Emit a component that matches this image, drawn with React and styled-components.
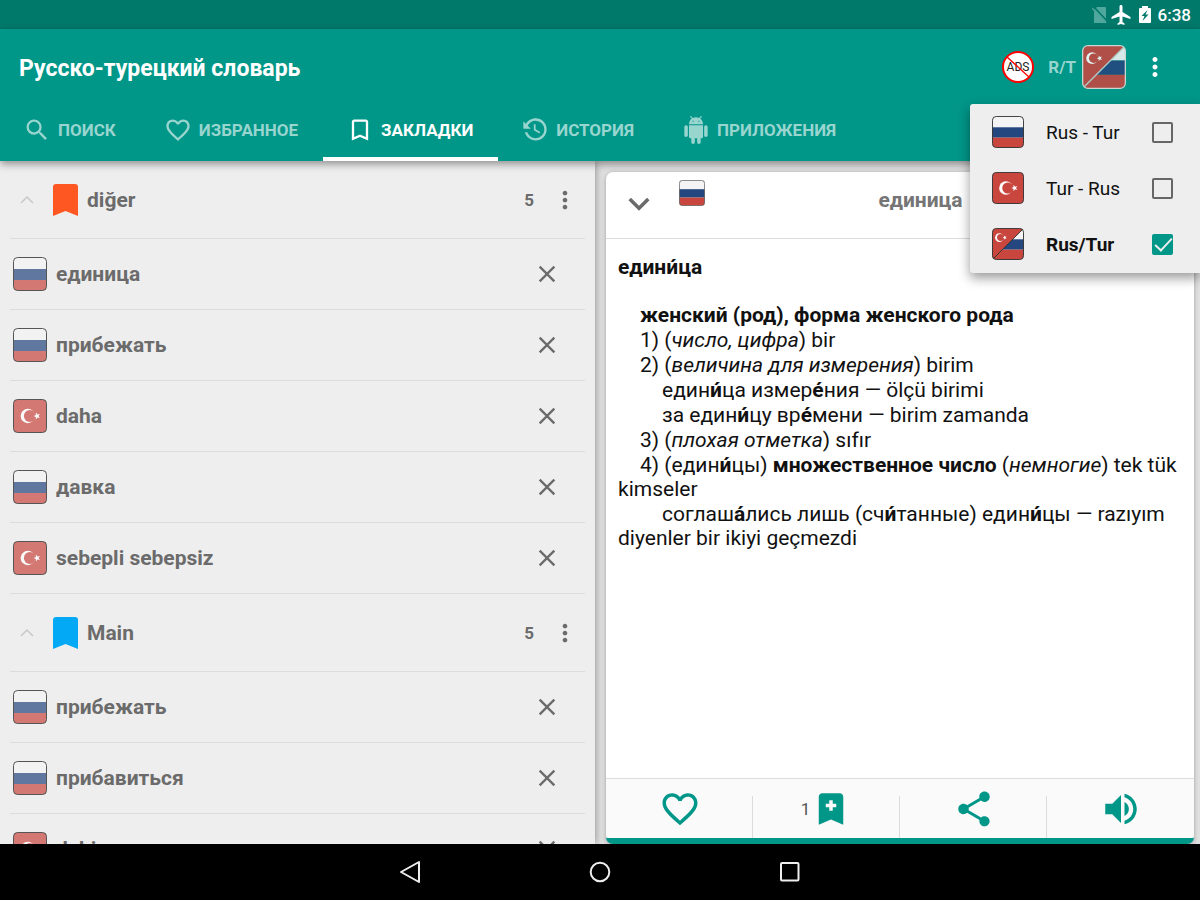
import React, { useState } from 'react'
import styled, { createGlobalStyle, css } from 'styled-components'

const teal = '#009688'

const paths = {
  search: 'M15.5 14h-.79l-.28-.27A6.471 6.471 0 0 0 16 9.5 6.5 6.5 0 1 0 9.5 16c1.61 0 3.09-.59 4.23-1.57l.27.28v.79l5 4.99L20.49 19l-4.99-5zm-6 0C7.01 14 5 11.99 5 9.5S7.01 5 9.5 5 14 7.01 14 9.5 11.99 14 9.5 14z',
  heart: 'M16.5 3c-1.74 0-3.41.81-4.5 2.09C10.91 3.81 9.24 3 7.5 3 4.42 3 2 5.42 2 8.5c0 3.78 3.4 6.86 8.55 11.54L12 21.35l1.45-1.32C18.6 15.36 22 12.28 22 8.5 22 5.42 19.58 3 16.5 3zm-4.4 15.55l-.1.1-.1-.1C7.14 14.24 4 11.39 4 8.5 4 6.5 5.5 5 7.5 5c1.54 0 3.04.99 3.57 2.36h1.87C13.46 5.99 14.96 5 16.5 5c2 0 3.5 1.5 3.5 3.5 0 2.89-3.14 5.74-7.9 10.05z',
  bookmark: 'M17 3H7c-1.1 0-1.99.9-1.99 2L5 21l7-3 7 3V5c0-1.1-.9-2-2-2zm0 15l-5-2.18L7 18V5h10v13z',
  history: 'M11 7v5.11l4.71 2.79.79-1.28-4-2.37V7M12.5 2C8.97 2 5.91 3.92 4.27 6.77L2 4.5V11h6.5L5.75 8.25C6.96 5.73 9.5 4 12.5 4a7.5 7.5 0 0 1 7.5 7.5 7.5 7.5 0 0 1-7.5 7.5c-3.27 0-6.03-2.09-7.06-5h-2.1c1.1 4.03 4.77 7 9.16 7 5.24 0 9.5-4.25 9.5-9.5A9.5 9.5 0 0 0 12.5 2z',
  android: 'M6 18c0 .55.45 1 1 1h1v3.5c0 .83.67 1.5 1.5 1.5s1.5-.67 1.5-1.5V19h2v3.5c0 .83.67 1.5 1.5 1.5s1.5-.67 1.5-1.5V19h1c.55 0 1-.45 1-1V8H6v10zM3.5 8C2.67 8 2 8.67 2 9.5v7c0 .83.67 1.5 1.5 1.5S5 17.33 5 16.5v-7C5 8.67 4.33 8 3.5 8zm17 0c-.83 0-1.5.67-1.5 1.5v7c0 .83.67 1.5 1.5 1.5s1.5-.67 1.5-1.5v-7c0-.83-.67-1.5-1.5-1.5zm-4.97-5.84l1.3-1.3c.2-.2.2-.51 0-.71-.2-.2-.51-.2-.71 0l-1.48 1.48C13.85 1.23 12.95 1 12 1c-.96 0-1.86.23-2.66.63L7.85.15c-.2-.2-.51-.2-.71 0-.2.2-.2.51 0 .71l1.31 1.31C6.97 3.26 6 5.01 6 7h12c0-1.99-.97-3.75-2.47-4.84zM10 5H9V4h1v1zm5 0h-1V4h1v1z',
  more: 'M12 8c1.1 0 2-.9 2-2s-.9-2-2-2-2 .9-2 2 .9 2 2 2zm0 2c-1.1 0-2 .9-2 2s.9 2 2 2 2-.9 2-2-.9-2-2-2zm0 6c-1.1 0-2 .9-2 2s.9 2 2 2 2-.9 2-2-.9-2-2-2z',
  close: 'M19 6.41L17.59 5 12 10.59 6.41 5 5 6.41 10.59 12 5 17.59 6.41 19 12 13.41 17.59 19 19 17.59 13.41 12z',
  share: 'M18 16.08c-.76 0-1.44.3-1.96.77L8.91 12.7c.05-.23.09-.46.09-.7s-.04-.47-.09-.7l7.05-4.11c.54.5 1.25.81 2.04.81 1.66 0 3-1.34 3-3s-1.34-3-3-3-3 1.34-3 3c0 .24.04.47.09.7L8.04 9.81C7.5 9.31 6.79 9 6 9c-1.66 0-3 1.34-3 3s1.34 3 3 3c.79 0 1.5-.31 2.04-.81l7.12 4.16c-.05.21-.08.43-.08.65 0 1.61 1.31 2.92 2.92 2.92 1.61 0 2.92-1.31 2.92-2.92s-1.31-2.92-2.92-2.92z',
  sound: 'M3 9v6h4l5 5V4L7 9H3zm13.5 3c0-1.77-1.02-3.29-2.5-4.03v8.05c1.48-.73 2.5-2.25 2.5-4.02zM14 3.23v2.06c2.89.86 5 3.54 5 6.71s-2.11 5.85-5 6.71v2.06c4.01-.91 7-4.49 7-8.77s-2.99-7.86-7-8.77z',
  bookmarkPlus: 'M17 3H7c-1.1 0-1.99.9-1.99 2L5 21l7-3 7 3V5c0-1.1-.9-2-2-2zM11 7h2v2h2v2h-2v2h-2v-2H9V9h2z',
  down: 'M7.41 7.84L12 12.42l4.59-4.58L18 9.25l-6 6-6-6z',
}

const Icon = ({ name, size = 28 }) => (
  <svg width={size} height={size} viewBox="0 0 24 24" fill="currentColor" fillRule="evenodd" aria-hidden="true">
    <path d={paths[name]} />
  </svg>
)

const Crescent = () => (
  <>
    <circle cx="14.8" cy="17" r="7.2" fill="#fff" />
    <circle cx="16.8" cy="17" r="5.9" fill="#c8463e" />
    <polygon
      points="24,13.4 24.9,15.8 27.4,15.9 25.4,17.5 26.1,19.9 24,18.5 21.9,19.9 22.6,17.5 20.6,15.9 23.1,15.8"
      fill="#fff"
      transform="rotate(-18 24 17)"
    />
  </>
)

// kind: rus, tur or both
const Flag = ({ kind, size, fade = 1, edge = '#555' }) => (
  <FlagSvg width={size} height={size} viewBox="0 0 34 34" $fade={fade} aria-hidden="true">
    <defs>
      <clipPath id="flagShape"><rect x="0.5" y="0.5" width="33" height="33" rx="4" /></clipPath>
    </defs>
    <g clipPath="url(#flagShape)">
      {kind !== 'tur' && (
        <>
          <rect width="34" height="12" fill="#f4f4f4" />
          <rect y="12" width="34" height="11" fill="#24477f" />
          <rect y="23" width="34" height="11" fill="#c8463e" />
        </>
      )}
      {kind === 'tur' && (
        <>
          <rect width="34" height="34" fill="#c8463e" />
          <Crescent />
        </>
      )}
      {kind === 'both' && (
        <>
          <path d="M0 0H34L0 34z" fill="#c8463e" />
          <path d="M34 0L0 34" stroke={edge} strokeWidth="1" />
          <g transform="translate(-1.5 -0.5) scale(.63)"><Crescent /></g>
        </>
      )}
    </g>
    <rect x="0.5" y="0.5" width="33" height="33" rx="4" fill="none" stroke={edge} strokeWidth="1" />
  </FlagSvg>
)

const tabs = [
  { icon: 'search', label: 'ПОИСК' },
  { icon: 'heart', label: 'ИЗБРАННОЕ' },
  { icon: 'bookmark', label: 'ЗАКЛАДКИ' },
  { icon: 'history', label: 'ИСТОРИЯ' },
  { icon: 'android', label: 'ПРИЛОЖЕНИЯ' },
]

const groups = [
  {
    name: 'diğer',
    color: '#ff5722',
    words: [
      { text: 'единица', lang: 'rus' },
      { text: 'прибежать', lang: 'rus' },
      { text: 'daha', lang: 'tur' },
      { text: 'давка', lang: 'rus' },
      { text: 'sebepli sebepsiz', lang: 'tur' },
    ],
    count: 5,
  },
  {
    name: 'Main',
    color: '#03a9f4',
    words: [
      { text: 'прибежать', lang: 'rus' },
      { text: 'прибавиться', lang: 'rus' },
      { text: 'dahi', lang: 'tur' },
    ],
    count: 5,
  },
]

const modes = [
  { id: 'rus', label: 'Rus - Tur' },
  { id: 'tur', label: 'Tur - Rus' },
  { id: 'both', label: 'Rus/Tur' },
]

const App = () => {
  const [tab, setTab] = useState(2)
  const [mode, setMode] = useState('both')

  return (
    <Screen>
      <GlobalStyle />
      <StatusBar>
        <svg width="15" height="18" viewBox="0 0 15 18" aria-hidden="true">
          <path d="M5 1h8q1 0 1 1v15H2V4z" fill="#4fa79d" />
          <path d="M1.5 0.5l14 15" stroke="#00796b" strokeWidth="1.6" />
          <path d="M0 2l14 15" stroke="#4fa79d" strokeWidth="1.3" />
        </svg>
        <svg width="20" height="20" viewBox="1.5 2 20 20" fill="#fff" aria-hidden="true">
          <path d="M21 16v-2l-8-5V3.5c0-.83-.67-1.5-1.5-1.5S10 2.67 10 3.5V9l-8 5v2l8-2.5V19l-2 1.5V22l3.5-1 3.5 1v-1.5L13 19v-5.5l8 2.5z" />
        </svg>
        <Battery width="12" height="17" viewBox="0 0 12 17" aria-hidden="true">
          <path d="M3 0h6v2h2q1 0 1 1v13q0 1-1 1H1q-1 0-1-1V3q0-1 1-1h2z" fill="#fff" />
          <path d="M8.5 4L2.5 10h3L3.5 15l6-6.5h-3z" fill="#00796b" />
        </Battery>
        <Clock>6:38</Clock>
      </StatusBar>
      <Header>
        <TitleRow>
          <Title>Русско-турецкий словарь</Title>
          <AdsButton aria-label="ADS">
            <svg width="34" height="34" viewBox="0 0 34 34">
              <circle cx="17" cy="17" r="15" fill="#fff" stroke="#f00" strokeWidth="2" />
              <text x="17" y="21" textAnchor="middle" fontSize="12" fontFamily="Roboto, sans-serif" fontWeight="400" fill="#222">ADS</text>
              <path d="M6 7l22 20" stroke="#f00" strokeWidth="1.3" />
            </svg>
          </AdsButton>
          <ModeButton>
            <span>R/T</span>
            <Flag kind={mode} size={44} fade={0.88} edge="#c9d6d2" />
          </ModeButton>
          <IconButton $color="#fff" aria-label="Меню">
            <Icon name="more" size={30} />
          </IconButton>
        </TitleRow>
        <Tabs>
          {tabs.map((t, i) => (
            <Tab key={t.label} $active={i === tab} onClick={() => setTab(i)}>
              <Icon name={t.icon} />
              {t.label}
            </Tab>
          ))}
        </Tabs>
        <Menu>
          {modes.map((m) => (
            <MenuItem key={m.id} $active={m.id === mode}>
              <Flag kind={m.id} size={32} edge="#333" />
              <span>{m.label}</span>
              <Check type="checkbox" checked={m.id === mode} onChange={() => setMode(m.id)} />
            </MenuItem>
          ))}
        </Menu>
      </Header>
      <Body>
        <ListPane>
          {groups.map((g) => (
            <section key={g.name}>
              <GroupRow>
                <Chevron width="16" height="10" viewBox="0 0 16 10" aria-hidden="true">
                  <path d="M2 8l6-6 6 6" fill="none" stroke="#c8c8c8" strokeWidth="1.5" />
                </Chevron>
                <svg width="25" height="32" viewBox="0 0 25 32" aria-hidden="true">
                  <path d="M3 0h19q3 0 3 3v29l-12.5-5L0 32V3q0-3 3-3z" fill={g.color} />
                </svg>
                <GroupName>{g.name}</GroupName>
                <Count>{g.count}</Count>
                <IconButton aria-label="Меню">
                  <Icon name="more" size={28} />
                </IconButton>
              </GroupRow>
              {g.words.map((w) => (
                <WordRow key={w.text}>
                  <Flag kind={w.lang} size={34} fade={0.7} />
                  <Word>{w.text}</Word>
                  <IconButton aria-label="Удалить">
                    <Icon name="close" />
                  </IconButton>
                </WordRow>
              ))}
            </section>
          ))}
        </ListPane>
        <CardPane>
          <Card>
            <CardHead>
              <IconButton aria-label="Свернуть">
                <Icon name="down" size={42} />
              </IconButton>
              <HeadFlag><Flag kind="rus" size={26} /></HeadFlag>
              <CardTitle>единица</CardTitle>
            </CardHead>
            <Article>
              <h2>едини́ца</h2>
              <Line $level={1}><b>женский (род), форма женского рода</b></Line>
              <Line $level={1}>1) (<i>число, цифра</i>) bir</Line>
              <Line $level={1}>2) (<i>величина для измерения</i>) birim</Line>
              <Line $level={2}>един<b>и́</b>ца измер<b>е́</b>ния — ölçü birimi</Line>
              <Line $level={2}>за един<b>и́</b>цу вр<b>е́</b>мени — birim zamanda</Line>
              <Line $level={1}>3) (<i>плохая отметка</i>) sıfır</Line>
              <Line $level={1}>4) (един<b>и́</b>цы) <b>множественное число</b> (<i>немногие</i>) tek tük kimseler</Line>
              <Line $level={2}>соглаш<b>а́</b>лись лишь (сч<b>и́</b>танные) един<b>и́</b>цы — razıyım diyenler bir ikiyi geçmezdi</Line>
            </Article>
            <Actions>
              <Action aria-label="Избранное"><Icon name="heart" size={42} /></Action>
              <Action aria-label="Закладки"><small>1</small><Icon name="bookmarkPlus" size={42} /></Action>
              <Action aria-label="Поделиться"><Icon name="share" size={42} /></Action>
              <Action aria-label="Произношение"><Icon name="sound" size={42} /></Action>
            </Actions>
          </Card>
        </CardPane>
      </Body>
      <NavBar>
        <NavButton aria-label="Назад">
          <svg width="24" height="24" viewBox="0 0 24 24"><path d="M21 2v20L3 12z" /></svg>
        </NavButton>
        <NavButton aria-label="Домой">
          <svg width="24" height="24" viewBox="0 0 24 24"><circle cx="12" cy="12" r="9.3" /></svg>
        </NavButton>
        <NavButton aria-label="Обзор">
          <svg width="24" height="24" viewBox="0 0 24 24"><rect x="3" y="3" width="17.5" height="17.5" rx="1" /></svg>
        </NavButton>
      </NavBar>
    </Screen>
  )
}

//styled components
const GlobalStyle = createGlobalStyle`
  * {
    box-sizing: border-box;
  }
  body {
    margin: 0;
    font-family: Roboto, sans-serif;
    color: #111;
  }
  button {
    border: 0;
    padding: 0;
    background: none;
    font: inherit;
    color: inherit;
    cursor: pointer;
  }
  svg {
    display: block;
    flex: none;
  }
`

const Screen = styled.div`
  display: flex;
  flex-direction: column;
  height: 100vh;
  overflow: hidden;
  background: #e0e0e0;
`

const StatusBar = styled.div`
  display: flex;
  align-items: center;
  justify-content: flex-end;
  flex: none;
  height: 29px;
  padding-right: 9px;
  gap: 4px;
  background: #00796b;
  color: #fff;
`

const Battery = styled.svg`
  margin: 0 3px 0 4px;
`

const Clock = styled.span`
  font-size: 17px;
  font-weight: 500;
`

const Header = styled.header`
  position: relative;
  z-index: 2;
  flex: none;
  background: ${teal};
  box-shadow: 0 3px 8px rgba(0, 0, 0, 0.4);
`

const TitleRow = styled.div`
  display: flex;
  align-items: center;
  height: 76px;
  padding: 0 30px 0 19px;
`

const Title = styled.h1`
  flex: 1;
  margin: 0;
  padding-top: 2px;
  font-size: 23px;
  font-weight: 700;
  color: #fff;
`

const AdsButton = styled.button`
  margin-right: 13px;
`

const ModeButton = styled.button`
  display: flex;
  align-items: center;
  gap: 6px;
  margin-right: 14px;
  font-size: 17px;
  font-weight: 700;
  color: #99d5cf;
`

const IconButton = styled.button`
  display: flex;
  color: ${({ $color }) => $color || '#6b6b6b'};
`

const Tabs = styled.nav`
  display: flex;
`

const Tab = styled.button`
  display: flex;
  align-items: center;
  gap: 7px;
  height: 56px;
  padding: 0 25px 2px 23px;
  font-size: 17px;
  font-weight: 700;
  color: #99d5cf;
  border-bottom: 4px solid transparent;

  ${({ $active }) => $active && css`
    color: #fff;
    border-color: #fff;
  `}
`

const Menu = styled.div`
  position: absolute;
  top: 75px;
  right: 0;
  width: 230px;
  padding-bottom: 1px;
  background: #eee;
  border-radius: 3px 0 0 3px;
  box-shadow: 0 5px 12px rgba(0, 0, 0, 0.4);
`

const MenuItem = styled.label`
  display: flex;
  align-items: center;
  height: 56px;
  padding: 0 27px 0 22px;
  font-size: 19px;
  font-weight: ${({ $active }) => ($active ? 700 : 400)};

  span {
    flex: 1;
    padding-left: 22px;
  }
`

const Check = styled.input`
  appearance: none;
  width: 21px;
  height: 21px;
  margin: 0;
  border: 2px solid #666;
  border-radius: 2px;

  &:checked {
    border-color: ${teal};
    background: ${teal};
  }
  &:checked::after {
    content: '';
    display: block;
    width: 7px;
    height: 15px;
    margin: -2px 0 0 5px;
    border: solid #eee;
    border-width: 0 2px 2px 0;
    transform: rotate(43deg);
  }
`

const Body = styled.main`
  display: grid;
  grid-template-columns: 119fr 121fr;
  grid-template-rows: 100%;
  flex: 1;
  min-height: 0;
`

const ListPane = styled.div`
  min-width: 0;
  overflow: hidden;
  padding: 0 10px;
  background: #eee;
  box-shadow: 0 0 8px rgba(0, 0, 0, 0.4);
`

const GroupRow = styled.div`
  display: flex;
  align-items: center;
  height: 78px;
  padding: 0 6px 0 9px;
  border-bottom: 1px solid #dcdcdc;
`

const Chevron = styled.svg`
  margin-right: 18px;
`

const GroupName = styled.h2`
  flex: 1;
  margin: 0 0 0 9px;
  font-size: 21px;
  font-weight: 700;
  color: #6b6b6b;
`

const Count = styled.span`
  margin-right: 17px;
  font-size: 17px;
  font-weight: 700;
  color: #6b6b6b;
`

const WordRow = styled.div`
  display: flex;
  align-items: center;
  height: 71px;
  padding: 0 24px 0 3px;
  border-bottom: 1px solid #dcdcdc;
`

const Word = styled.span`
  flex: 1;
  padding-left: 9px;
  font-size: 21px;
  font-weight: 700;
  color: #6b6b6b;
`

const FlagSvg = styled.svg`
  g {
    opacity: ${({ $fade }) => $fade};
  }
  g g {
    opacity: 1;
  }
`

const CardPane = styled.div`
  display: flex;
  min-width: 0;
  padding: 11px 6px 0 11px;
`

const Card = styled.article`
  display: flex;
  flex: 1;
  flex-direction: column;
  background: #fff;
  border-bottom: 6px solid ${teal};
  border-radius: 7px;
  box-shadow: 0 1px 4px rgba(0, 0, 0, 0.3);
  overflow: hidden;
`

const CardHead = styled.div`
  display: flex;
  align-items: center;
  height: 67px;
  padding: 0 12px;
  border-bottom: 1px solid #dcdcdc;
`

const HeadFlag = styled.div`
  align-self: flex-start;
  padding: 8px 0 0 19px;
`

const CardTitle = styled.h2`
  flex: 1;
  margin: 0;
  padding: 0 46px 10px 0;
  text-align: center;
  font-size: 21px;
  font-weight: 700;
  color: #757575;
`

const Article = styled.div`
  flex: 1;
  padding: 16px 12px;
  font-size: 21px;
  line-height: 24px;

  h2 {
    margin: 0 0 24px;
    font-size: 21px;
    font-weight: 700;
  }
  b {
    font-weight: 700;
  }
`

const Line = styled.p`
  margin: 0 0 1px;
  text-indent: ${({ $level }) => $level * 22}px;
`

const Actions = styled.div`
  display: flex;
  height: 60px;
  border-top: 1px solid #dcdcdc;
  background: #fafafa;
`

const Action = styled.button`
  display: flex;
  flex: 1;
  align-items: center;
  justify-content: center;
  color: ${teal};
  background: linear-gradient(#dcdcdc, #dcdcdc) right bottom / 1px 42px no-repeat;

  &:last-child {
    background: none;
  }
  small {
    font-size: 17px;
    color: #555;
  }
`

const NavBar = styled.nav`
  display: flex;
  justify-content: center;
  gap: 166px;
  flex: none;
  height: 56px;
  background: #000;
`

const NavButton = styled.button`
  path,
  circle,
  rect {
    fill: none;
    stroke: #eee;
    stroke-width: 2;
    stroke-linejoin: round;
  }
`

export default App
